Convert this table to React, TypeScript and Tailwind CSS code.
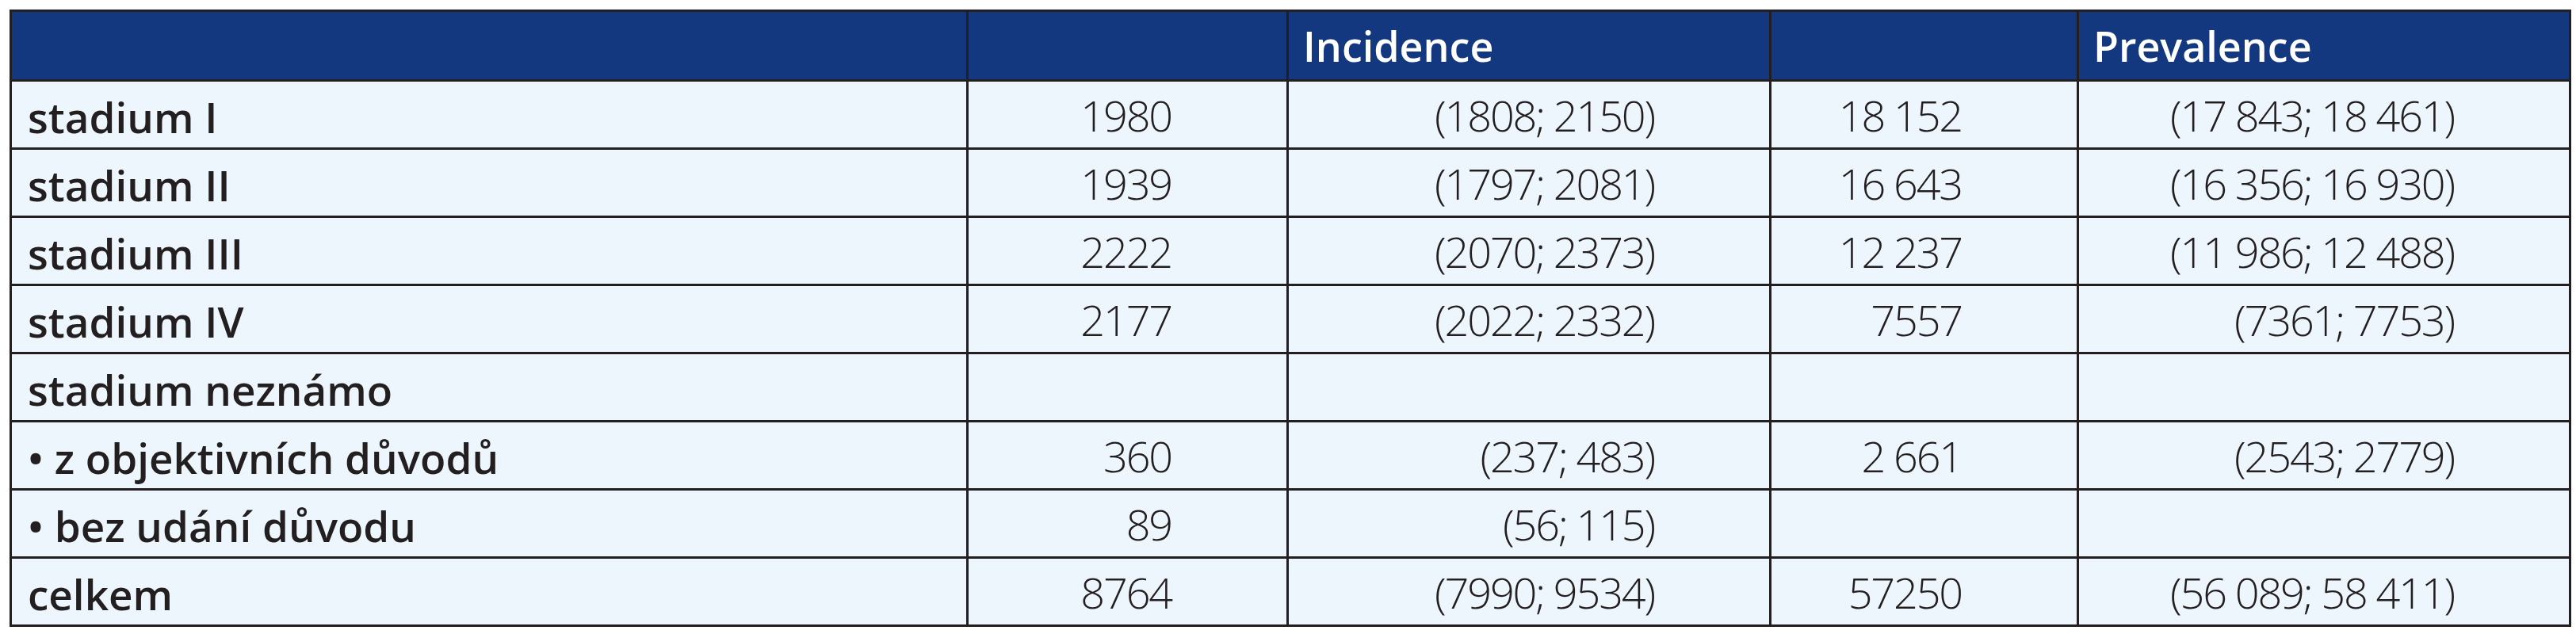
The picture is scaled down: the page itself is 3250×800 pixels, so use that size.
import React from "react";

interface Row {
    label: string;
    inc?: string;
    incCi?: string;
    prev?: string;
    prevCi?: string;
}

const rows: Row[] = [
    { label: "stadium I", inc: "1980", incCi: "(1808; 2150)", prev: "18 152", prevCi: "(17 843; 18 461)" },
    { label: "stadium II", inc: "1939", incCi: "(1797; 2081)", prev: "16 643", prevCi: "(16 356; 16 930)" },
    { label: "stadium III", inc: "2222", incCi: "(2070; 2373)", prev: "12 237", prevCi: "(11 986; 12 488)" },
    { label: "stadium IV", inc: "2177", incCi: "(2022; 2332)", prev: "7557", prevCi: "(7361; 7753)" },
    { label: "stadium neznámo" },
    { label: "• z objektivních důvodů", inc: "360", incCi: "(237; 483)", prev: "2 661", prevCi: "(2543; 2779)" },
    { label: "• bez udání důvodu", inc: "89", incCi: "(56; 115)" },
    { label: "celkem", inc: "8764", incCi: "(7990; 9534)", prev: "57250", prevCi: "(56 089; 58 411)" },
];

const cell = "border-[3px] border-[#231f20] h-[86px] p-0 align-middle";
const num = cell + " text-right pr-[145px] font-light text-[54px] tracking-[-0.04em] leading-none";

export default function App() {
    return (
        <div className="w-[3250px] h-[800px] bg-white pt-[12px] pl-[12px]" style={{ fontFamily: '"Open Sans", "Noto Sans", sans-serif' }}>
            <table className="border-collapse table-fixed w-[3229px] text-[#231f20]">
                <colgroup>
                    <col className="w-[1207px]" />
                    <col className="w-[404px]" />
                    <col className="w-[609px]" />
                    <col className="w-[388px]" />
                    <col className="w-[621px]" />
                </colgroup>
                <thead>
                    <tr className="bg-[#14387f] text-white">
                        <th className="border-[3px] border-[#231f20] h-[88px] p-0"></th>
                        <th className="border-[3px] border-[#231f20] h-[88px] p-0"></th>
                        <th className="border-[3px] border-[#231f20] h-[88px] pl-[18px] text-left font-semibold text-[52px] leading-none">Incidence</th>
                        <th className="border-[3px] border-[#231f20] h-[88px] p-0"></th>
                        <th className="border-[3px] border-[#231f20] h-[88px] pl-[18px] text-left font-semibold text-[52px] leading-none">Prevalence</th>
                    </tr>
                </thead>
                <tbody>
                    {rows.map((r) => (
                        <tr key={r.label} className="bg-[#eef6fd]">
                            <td className={cell + " pl-[20px] pt-[6px] text-left font-semibold text-[53px] leading-none"}>{r.label}</td>
                            <td className={num}>{r.inc}</td>
                            <td className={num}>{r.incCi}</td>
                            <td className={num}>{r.prev}</td>
                            <td className={num}>{r.prevCi}</td>
                        </tr>
                    ))}
                </tbody>
            </table>
        </div>
    );
}
